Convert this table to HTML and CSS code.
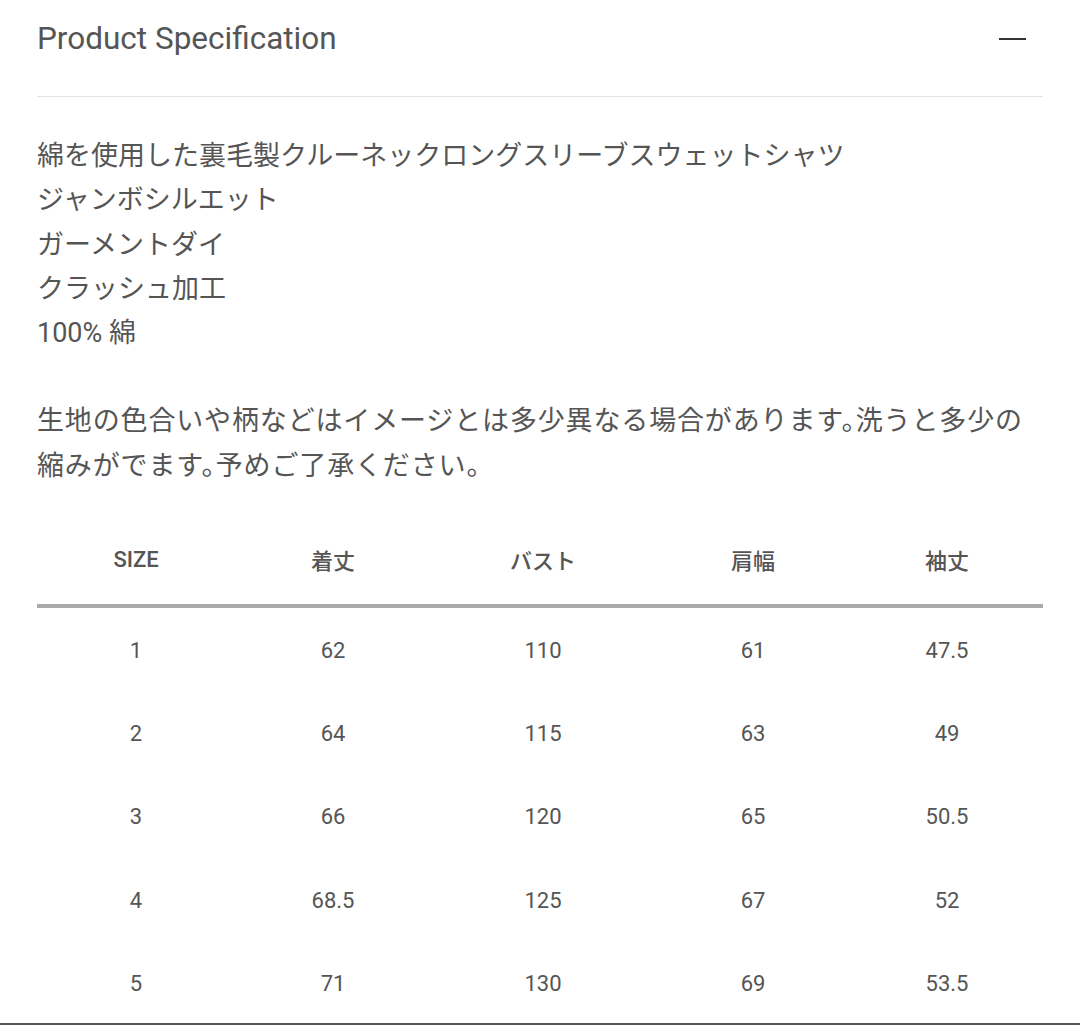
FILE: index.html
```html
<!DOCTYPE html>
<html lang="ja">
<head>
<meta charset="utf-8">
<link rel="stylesheet" href="styles.css">
</head>
<body>
<div class="page">
  <div class="head">
    <h2 class="title">Product Specification</h2>
    <span class="minus"></span>
  </div>
  <div class="list">
    <div>綿を使用した裏毛製クルーネックロングスリーブスウェットシャツ</div>
    <div>ジャンボシルエット</div>
    <div>ガーメントダイ</div>
    <div>クラッシュ加工</div>
    <div>100% 綿</div>
  </div>
  <p class="note">生地の色合いや柄などはイメージとは多少異なる場合があります。洗うと多少の縮みがでます。予めご了承ください。</p>
  <table class="size">
    <colgroup>
      <col class="c1"><col class="c2"><col class="c3"><col class="c4"><col class="c5">
    </colgroup>
    <thead>
      <tr><th>SIZE</th><th>着丈</th><th>バスト</th><th>肩幅</th><th>袖丈</th></tr>
    </thead>
    <tbody>
      <tr><td>1</td><td>62</td><td>110</td><td>61</td><td>47.5</td></tr>
      <tr><td>2</td><td>64</td><td>115</td><td>63</td><td>49</td></tr>
      <tr><td>3</td><td>66</td><td>120</td><td>65</td><td>50.5</td></tr>
      <tr><td>4</td><td>68.5</td><td>125</td><td>67</td><td>52</td></tr>
      <tr><td>5</td><td>71</td><td>130</td><td>69</td><td>53.5</td></tr>
    </tbody>
  </table>
</div>
<div class="bottom-rule"></div>
</body>
</html>
```

FILE: styles.css
```css
html, body {
  margin: 0;
  padding: 0;
  background: #ffffff;
}
body {
  font-family: Roboto, "Noto Sans CJK JP", sans-serif;
  color: #555555;
  height: 1025px;
  overflow: hidden;
}
.page {
  padding: 0 37px;
}
.head {
  height: 97px;
  border-bottom: 1px solid #e2e2e2;
  display: flex;
  align-items: center;
  justify-content: space-between;
  box-sizing: border-box;
  padding-bottom: 18px;
}
.title {
  margin: 0;
  font-size: 31.5px;
  font-weight: 400;
  color: #555555;
  line-height: 40px;
}
.minus {
  width: 27px;
  height: 2px;
  background: #333333;
  margin-right: 17px;
}
.list {
  margin-top: 37px;
  font-size: 27px;
  line-height: 44.3px;
  font-weight: 400;
}
.note {
  margin: 44px 0 0 0;
  font-size: 27px;
  line-height: 45px;
  letter-spacing: 0.85px;
  font-feature-settings: "halt";
}
.size {
  width: 100%;
  border-collapse: collapse;
  table-layout: fixed;
  margin-top: 31px;
}
.c1 { width: 198px; }
.c2 { width: 196px; }
.c3 { width: 224px; }
.c4 { width: 196px; }
.c5 { width: 192px; }
.size th {
  height: 86px;
  font-size: 22px;
  font-weight: 500;
  color: #555555;
  text-align: center;
  vertical-align: middle;
  padding: 0 0 6px 0;
  border-bottom: 4px solid #aaaaaa;
  box-sizing: border-box;
}
.size td {
  height: 83.3px;
  font-size: 22px;
  text-align: center;
  vertical-align: middle;
  padding: 0;
  color: #555555;
}
.bottom-rule {
  position: absolute;
  left: 0;
  right: 0;
  top: 1023px;
  height: 2px;
  background: #555555;
}
```
